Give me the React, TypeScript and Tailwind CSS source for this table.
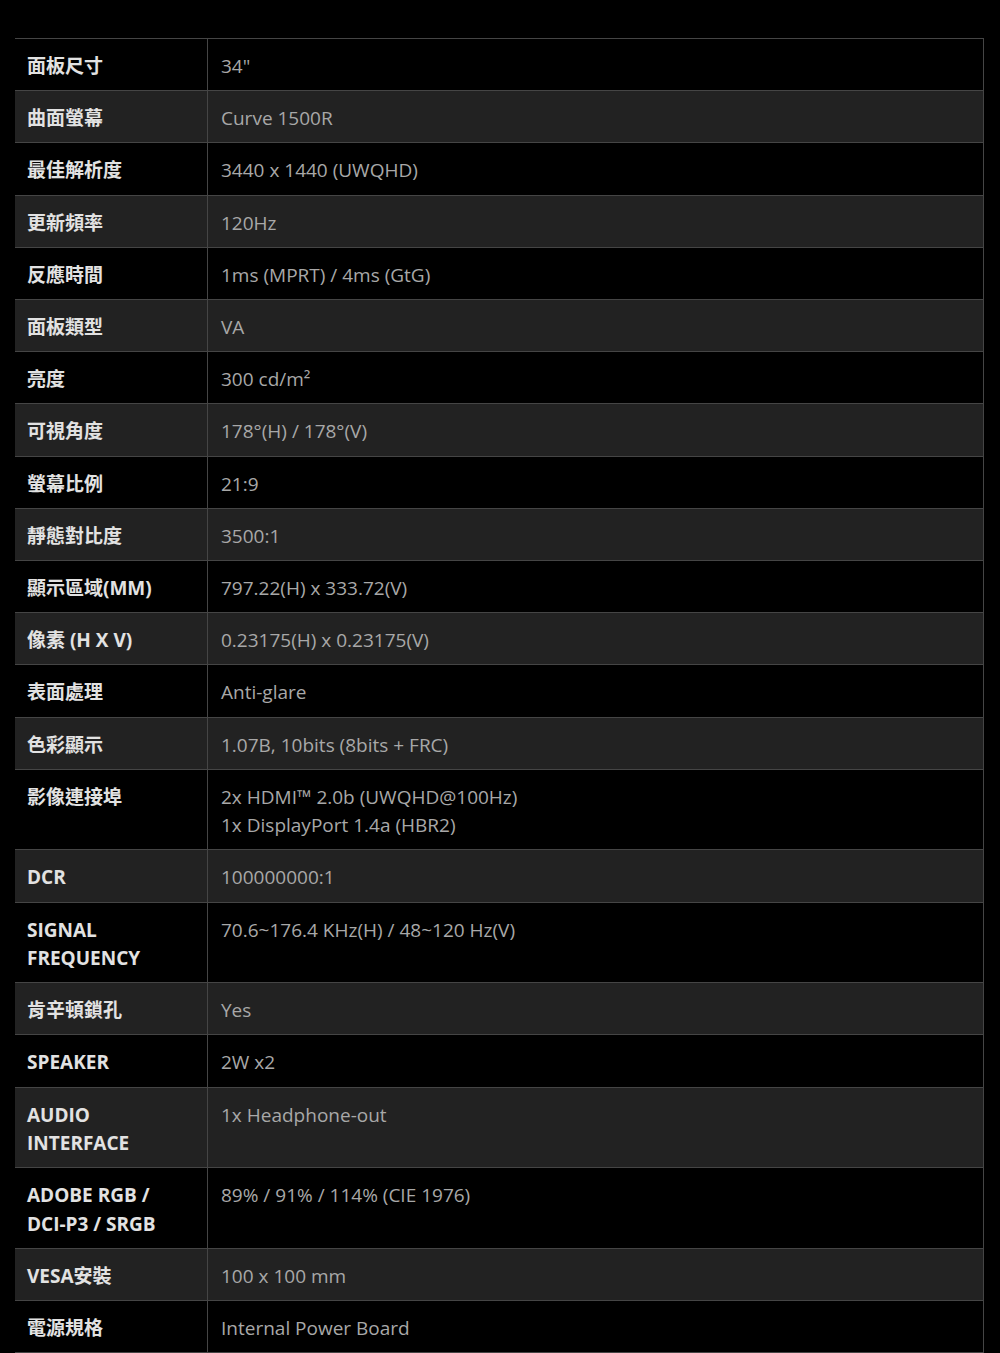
import React from "react";

type Row = { label: string; value: React.ReactNode };

const rows: Row[] = [
  { label: "面板尺寸", value: '34"' },
  { label: "曲面螢幕", value: "Curve 1500R" },
  { label: "最佳解析度", value: "3440 x 1440 (UWQHD)" },
  { label: "更新頻率", value: "120Hz" },
  { label: "反應時間", value: "1ms (MPRT) / 4ms (GtG)" },
  { label: "面板類型", value: "VA" },
  { label: "亮度", value: "300 cd/m²" },
  { label: "可視角度", value: "178°(H) / 178°(V)" },
  { label: "螢幕比例", value: "21:9" },
  { label: "靜態對比度", value: "3500:1" },
  { label: "顯示區域(MM)", value: "797.22(H) x 333.72(V)" },
  { label: "像素 (H X V)", value: "0.23175(H) x 0.23175(V)" },
  { label: "表面處理", value: "Anti-glare" },
  { label: "色彩顯示", value: "1.07B, 10bits (8bits + FRC)" },
  {
    label: "影像連接埠",
    value: (
      <>
        2x HDMI™ 2.0b (UWQHD@100Hz)
        <br />
        1x DisplayPort 1.4a (HBR2)
      </>
    ),
  },
  { label: "DCR", value: "100000000:1" },
  {
    label: "SIGNAL FREQUENCY",
    value: "70.6~176.4 KHz(H) / 48~120 Hz(V)",
  },
  { label: "肯辛頓鎖孔", value: "Yes" },
  { label: "SPEAKER", value: "2W x2" },
  { label: "AUDIO INTERFACE", value: "1x Headphone-out" },
  { label: "ADOBE RGB / DCI-P3 / SRGB", value: "89% / 91% / 114% (CIE 1976)" },
  { label: "VESA安裝", value: "100 x 100 mm" },
  { label: "電源規格", value: "Internal Power Board" },
];

export default function App() {
  return (
    <div
      className="w-[1000px] h-[1353px] bg-black pt-[38px] pl-[15px] overflow-hidden"
      style={{ fontFamily: '"Open Sans", "Noto Sans CJK TC", sans-serif' }}
    >
      <div className="w-[969px] border-t border-r border-[#454545]">
        {rows.map((r, i) => (
          <div
            key={i}
            className={`flex border-b border-[#454545] ${i % 2 === 1 ? "bg-[#222222]" : "bg-black"}`}
          >
            <div className="w-[193px] shrink-0 border-r border-[#454545] pl-[12px] pr-[20px] pt-[13px] pb-[9.8px] text-[19px] leading-[28.4px] font-bold text-[#e2e2e2]">
              {r.label}
            </div>
            <div className="flex-1 pl-[13px] pt-[13px] pb-[9.8px] text-[19px] leading-[28.4px] text-[#a8a8a8]">
              {r.value}
            </div>
          </div>
        ))}
      </div>
    </div>
  );
}
